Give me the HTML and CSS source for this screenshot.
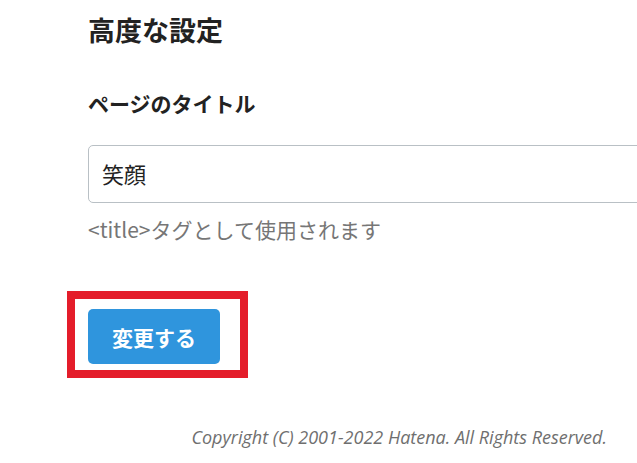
FILE: index.html
```html
<!DOCTYPE html>
<html lang="ja">
<head>
  <meta charset="UTF-8">
  <meta name="viewport" content="width=device-width, initial-scale=1.0">
  <title>高度な設定</title>
  <link rel="stylesheet" href="styles.css">
</head>
<body>
  <div class="page">
    <div class="settings">
      <h2 class="section-title">高度な設定</h2>
      <label class="field-label" for="pageTitle">ページのタイトル</label>
      <div class="field">
        <input type="text" id="pageTitle" class="text-input" value="笑顔">
      </div>
      <p class="hint">&lt;title&gt;タグとして使用されます</p>
      <div class="highlight">
        <button class="submit-btn">変更する</button>
      </div>
    </div>
    <footer class="footer">Copyright (C) 2001-2022 Hatena. All Rights Reserved.</footer>
  </div>
</body>
</html>
```

FILE: styles.css
```css
body {
  margin: 0;
  background: white;
  font-family: "Noto Sans CJK JP", "Noto Sans", sans-serif;
  color: #222;
  overflow: hidden;
}
.page {
  width: 637px;
  height: 463px;
  overflow: hidden;
}
.settings {
  padding-left: 88px;
  padding-top: 12px;
}
.section-title {
  margin: 0;
  font-size: 27px;
  font-weight: 700;
  line-height: 36px;
}
.field-label {
  display: block;
  margin-top: 40px;
  font-size: 21px;
  font-weight: 700;
  line-height: 30px;
}
.field {
  margin-top: 27px;
  width: 600px;
}
.text-input {
  box-sizing: border-box;
  width: 100%;
  height: 58px;
  padding: 0 0 3px 13px;
  border: 1px solid #b9c0c5;
  border-radius: 5px;
  font-family: inherit;
  font-size: 22px;
  color: #222;
}
.hint {
  margin: 11px 0 0;
  font-size: 21px;
  line-height: 30px;
  color: #767676;
}
.highlight {
  display: inline-block;
  margin-top: 47px;
  margin-left: -21px;
  padding: 10px 20px 6px 13px;
  border: 8px solid #e41d2a;
}
.submit-btn {
  display: block;
  width: 132px;
  height: 55px;
  border: none;
  border-radius: 5px;
  background: #2f95dd;
  color: white;
  font-family: inherit;
  font-size: 21px;
  font-weight: 700;
  cursor: pointer;
}
.footer {
  margin-top: 47px;
  padding-right: 30px;
  text-align: right;
  font-family: "Open Sans", "Noto Sans", sans-serif;
  font-style: italic;
  font-size: 18px;
  line-height: 25px;
  color: #6f6f6f;
}
```
